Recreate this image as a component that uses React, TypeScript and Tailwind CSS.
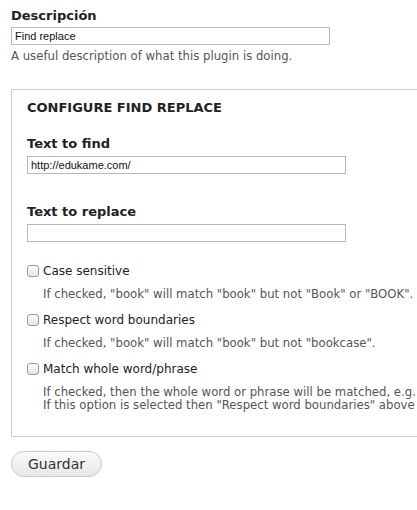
import React from 'react'

const LABEL = "block font-bold text-[13px] text-[#222] leading-[16px]"
const DESC = "text-[11.7px] text-[#555] leading-[13px] whitespace-nowrap"
const INPUT = "block h-[18px] border border-[#b8b8b8] px-[3px] text-[11px] text-[#111] outline-none bg-white"
const ARIAL = { fontFamily: '"Liberation Sans", Arial, sans-serif' }

function Option({ label, children }: { label: string; children: React.ReactNode }) {
  return (
    <div>
      <label className="flex items-center gap-[4px] text-[12px] text-[#222] leading-[16px]">
        <span className="w-[12px] h-[12px] rounded-[3px] border border-[#9a9a9a] bg-gradient-to-b from-white to-[#e4e4e4] shrink-0" />
        {label}
      </label>
      <div className={`${DESC} pl-[16px] mt-[9px]`}>{children}</div>
    </div>
  )
}

export default function App() {
  return (
    <div className="w-[417px] h-[510px] overflow-hidden bg-white" style={{ fontFamily: '"DejaVu Sans", sans-serif' }}>
      <div className="w-[520px] pl-[11px] pt-[8px]">
        <label className={LABEL}>Descripción</label>
        <input className={`${INPUT} w-[319px] mt-[3px]`} style={ARIAL} defaultValue="Find replace" />
        <p className={`${DESC} mt-[5px]`}>A useful description of what this plugin is doing.</p>

        <div className="mt-[26px] border border-[#cccccc] pl-[15px] pt-[10px] pb-[24px]">
          <h2 className="font-bold text-[13px] text-[#222] uppercase leading-[16px]">Configure find replace</h2>

          <label className={`${LABEL} mt-[20px]`}>Text to find</label>
          <input className={`${INPUT} w-[319px] mt-[4px]`} style={ARIAL} defaultValue="http://edukame.com/" />

          <label className={`${LABEL} mt-[30px]`}>Text to replace</label>
          <input className={`${INPUT} w-[319px] mt-[4px]`} style={ARIAL} defaultValue="" />

          <div className="mt-[21px] flex flex-col gap-[11px]">
            <Option label="Case sensitive">If checked, "book" will match "book" but not "Book" or "BOOK".</Option>
            <Option label="Respect word boundaries">If checked, "book" will match "book" but not "bookcase".</Option>
            <Option label="Match whole word/phrase">
              If checked, then the whole word or phrase will be matched, e.g. "book" will not match "a book".
              <br />
              If this option is selected then "Respect word boundaries" above will be ignored.
            </Option>
          </div>
        </div>

        <button className="mt-[14px] w-[91px] h-[26px] rounded-full border border-[#c8c8c8] bg-gradient-to-b from-[#fbfbfb] to-[#e6e6e6] text-[14px] text-[#333] leading-none">
          Guardar
        </button>
      </div>
    </div>
  )
}
